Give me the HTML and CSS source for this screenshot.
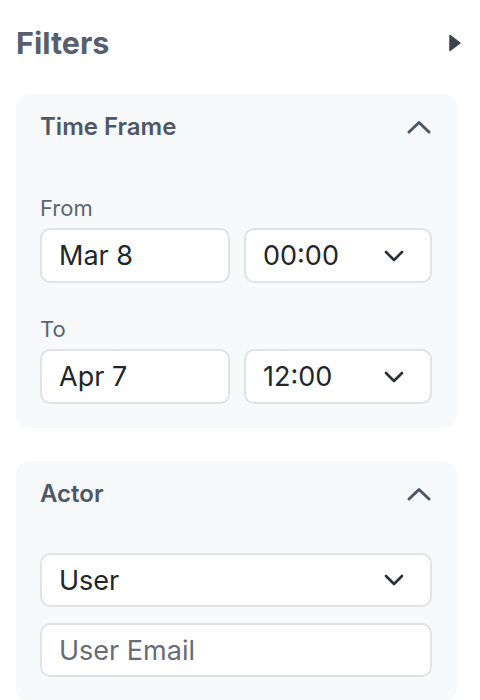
FILE: index.html
```html
<!DOCTYPE html>
<html>
<head>
<meta charset="utf-8">
<link rel="stylesheet" href="styles.css">
</head>
<body>
<div class="panel">
  <div class="panel-head">
    <h1 class="title">Filters</h1>
    <svg class="collapse" width="12" height="18" viewBox="0 0 12 18"><path d="M1 1.5 L11 9 L1 16.5 Z" fill="#3d4350" stroke="#3d4350" stroke-width="1.5" stroke-linejoin="round"/></svg>
  </div>

  <section class="card">
    <div class="card-head">
      <span class="card-title">Time Frame</span>
      <svg class="chev-up" width="24" height="14" viewBox="0 0 24 14"><polyline points="2,12 12,2.5 22,12" fill="none" stroke="#4e5766" stroke-width="3" stroke-linecap="round" stroke-linejoin="round"/></svg>
    </div>
    <div class="card-body time-body">
      <div class="field">
        <div class="label">From</div>
        <div class="row">
          <div class="box">Mar 8</div>
          <div class="box select"><span>00:00</span><svg class="chev-down" width="20" height="12" viewBox="0 0 20 12"><polyline points="2,2 10,10 18,2" fill="none" stroke="#2b2f36" stroke-width="2.6" stroke-linecap="round" stroke-linejoin="round"/></svg></div>
        </div>
      </div>
      <div class="field">
        <div class="label">To</div>
        <div class="row">
          <div class="box">Apr 7</div>
          <div class="box select"><span>12:00</span><svg class="chev-down" width="20" height="12" viewBox="0 0 20 12"><polyline points="2,2 10,10 18,2" fill="none" stroke="#2b2f36" stroke-width="2.6" stroke-linecap="round" stroke-linejoin="round"/></svg></div>
        </div>
      </div>
    </div>
  </section>

  <section class="card">
    <div class="card-head">
      <span class="card-title">Actor</span>
      <svg class="chev-up" width="24" height="14" viewBox="0 0 24 14"><polyline points="2,12 12,2.5 22,12" fill="none" stroke="#4e5766" stroke-width="3" stroke-linecap="round" stroke-linejoin="round"/></svg>
    </div>
    <div class="card-body actor-body">
      <div class="box select"><span>User</span><svg class="chev-down" width="20" height="12" viewBox="0 0 20 12"><polyline points="2,2 10,10 18,2" fill="none" stroke="#2b2f36" stroke-width="2.6" stroke-linecap="round" stroke-linejoin="round"/></svg></div>
      <div class="box placeholder">User Email</div>
    </div>
  </section>
</div>
</body>
</html>
```

FILE: styles.css
```css
html, body {
  margin: 0;
  padding: 0;
  background: #ffffff;
}

body {
  font-family: Inter, "Noto Sans", "Liberation Sans", sans-serif;
}

.panel {
  padding: 0 19px 0 16px;
}

.panel-head {
  display: flex;
  align-items: center;
  justify-content: space-between;
  padding-top: 24px;
  height: 37px;
}

.title {
  margin: 0;
  font-size: 30.5px;
  line-height: 37px;
  font-weight: 700;
  color: #555f6e;
}

.collapse {
  display: block;
}

.card {
  margin-top: 33px;
  width: 441px;
  box-sizing: border-box;
  background: #f8f9fb;
  border-radius: 14px;
  padding: 19px 25px 24px 24px;
}

.card-head {
  display: flex;
  align-items: center;
  justify-content: space-between;
  height: 28px;
}

.card-title {
  font-size: 24px;
  line-height: 28px;
  font-weight: 600;
  color: #4e5766;
}

.chev-up {
  display: block;
  margin-right: 1px;
}

.time-body {
  padding-top: 54px;
  display: flex;
  flex-direction: column;
  gap: 33px;
}

.actor-body {
  padding-top: 45px;
  display: flex;
  flex-direction: column;
  gap: 16px;
}

.label {
  font-size: 22px;
  line-height: 27px;
  color: #5d6572;
  margin-bottom: 6px;
}

.row {
  display: grid;
  grid-template-columns: 190px 188px;
  gap: 14px;
}

.box {
  box-sizing: border-box;
  height: 55px;
  border: 2px solid #e0e2e6;
  border-radius: 10px;
  background: #ffffff;
  padding: 0 26px 0 17px;
  display: flex;
  align-items: center;
  font-size: 27px;
  color: #222529;
}

.actor-body .box {
  height: 54px;
}

.select {
  justify-content: space-between;
}

.chev-down {
  display: block;
}

.placeholder {
  color: #686d75;
}
```
